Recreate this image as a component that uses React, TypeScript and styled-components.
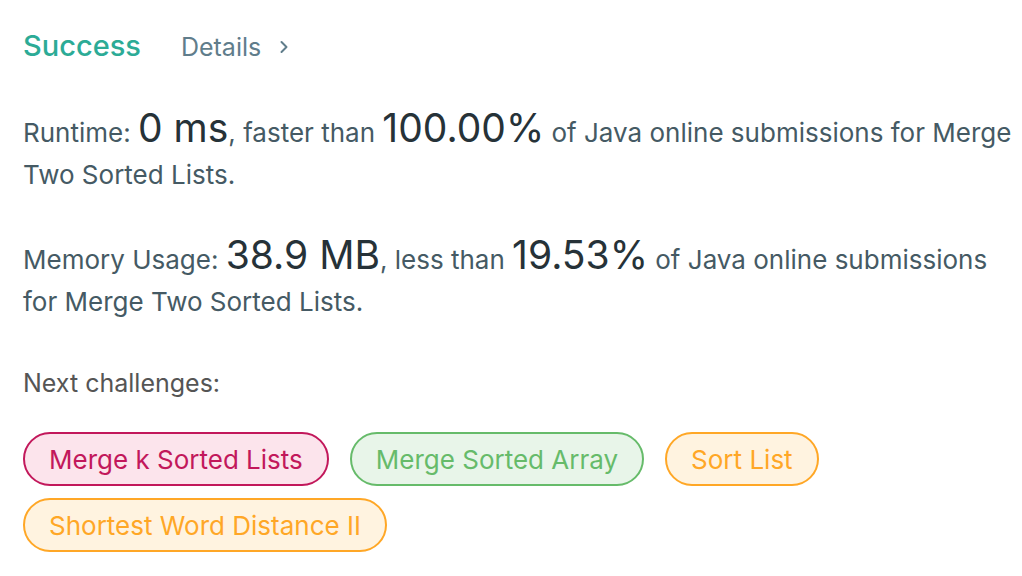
import React from "react";
import styled, { createGlobalStyle } from "styled-components";

const GlobalStyle = createGlobalStyle`
	html, body {
		margin: 0;
		padding: 0;
		background: #fff;
	}
	body {
		font-family: Inter, "Noto Sans", "Liberation Sans", sans-serif;
		-webkit-font-smoothing: antialiased;
	}
`;

const Page = styled.div`
	width: 1022px;
	height: 576px;
	box-sizing: border-box;
	padding: 28px 0 0 23px;
	overflow: hidden;
`;

const Header = styled.div`
	display: flex;
	align-items: baseline;
	gap: 40px;
	height: 50px;
`;

const Status = styled.span`
	font-size: 29px;
	font-weight: 500;
	color: #2cab96;
`;

const DetailsLink = styled.a`
	display: flex;
	align-items: center;
	gap: 18px;
	font-size: 25px;
	color: #607d8b;
	text-decoration: none;
`;

const Stat = styled.p`
	margin: 29px 0 0;
	font-size: 26px;
	line-height: 42px;
	color: #455a64;

	& + & {
		margin-top: 38px;
	}
`;

const Big = styled.span`
	display: inline-block;
	font-size: 39px;
	line-height: 42px;
	color: #263238;
`;

const Label = styled.p`
	margin: 39px 0 0;
	font-size: 25px;
	line-height: 42px;
	color: #555;
`;

const Tags = styled.div`
	display: flex;
	flex-wrap: wrap;
	gap: 12px 21px;
	margin-top: 28px;
	width: 880px;
`;

const tones = {
	hard: { fg: "#c2185b", bg: "#fce4ec" },
	easy: { fg: "#66bb6a", bg: "#e8f5e9" },
	medium: { fg: "#ffa726", bg: "#fff3e0" },
};

type Tone = keyof typeof tones;

const Tag = styled.a<{ $tone: Tone }>`
	display: inline-flex;
	align-items: center;
	height: 54px;
	box-sizing: border-box;
	padding: 0 24px;
	border-radius: 27px;
	border: 2px solid ${({ $tone }) => tones[$tone].fg};
	background: ${({ $tone }) => tones[$tone].bg};
	color: ${({ $tone }) => tones[$tone].fg};
	font-size: 26px;
	text-decoration: none;
`;

const challenges: { name: string; tone: Tone }[] = [
	{ name: "Merge k Sorted Lists", tone: "hard" },
	{ name: "Merge Sorted Array", tone: "easy" },
	{ name: "Sort List", tone: "medium" },
	{ name: "Shortest Word Distance II", tone: "medium" },
];

function Chevron() {
	return (
		<svg width="10" height="14" viewBox="0 0 10 14" fill="none">
			<path d="M2.5 2 L7.5 7 L2.5 12" stroke="#607d8b" strokeWidth="2" strokeLinecap="round" strokeLinejoin="round" />
		</svg>
	);
}

export default function App() {
	return (
		<Page>
			<GlobalStyle />
			<Header>
				<Status>Success</Status>
				<DetailsLink href="#">
					Details <Chevron />
				</DetailsLink>
			</Header>
			<Stat>
				Runtime: <Big>0 ms</Big>, faster than <Big>100.00%</Big> of Java online submissions for Merge Two Sorted Lists.
			</Stat>
			<Stat>
				Memory Usage: <Big>38.9 MB</Big>, less than <Big>19.53%</Big> of Java online submissions for Merge Two Sorted Lists.
			</Stat>
			<Label>Next challenges:</Label>
			<Tags>
				{challenges.map((c) => (
					<Tag key={c.name} href="#" $tone={c.tone}>
						{c.name}
					</Tag>
				))}
			</Tags>
		</Page>
	);
}
